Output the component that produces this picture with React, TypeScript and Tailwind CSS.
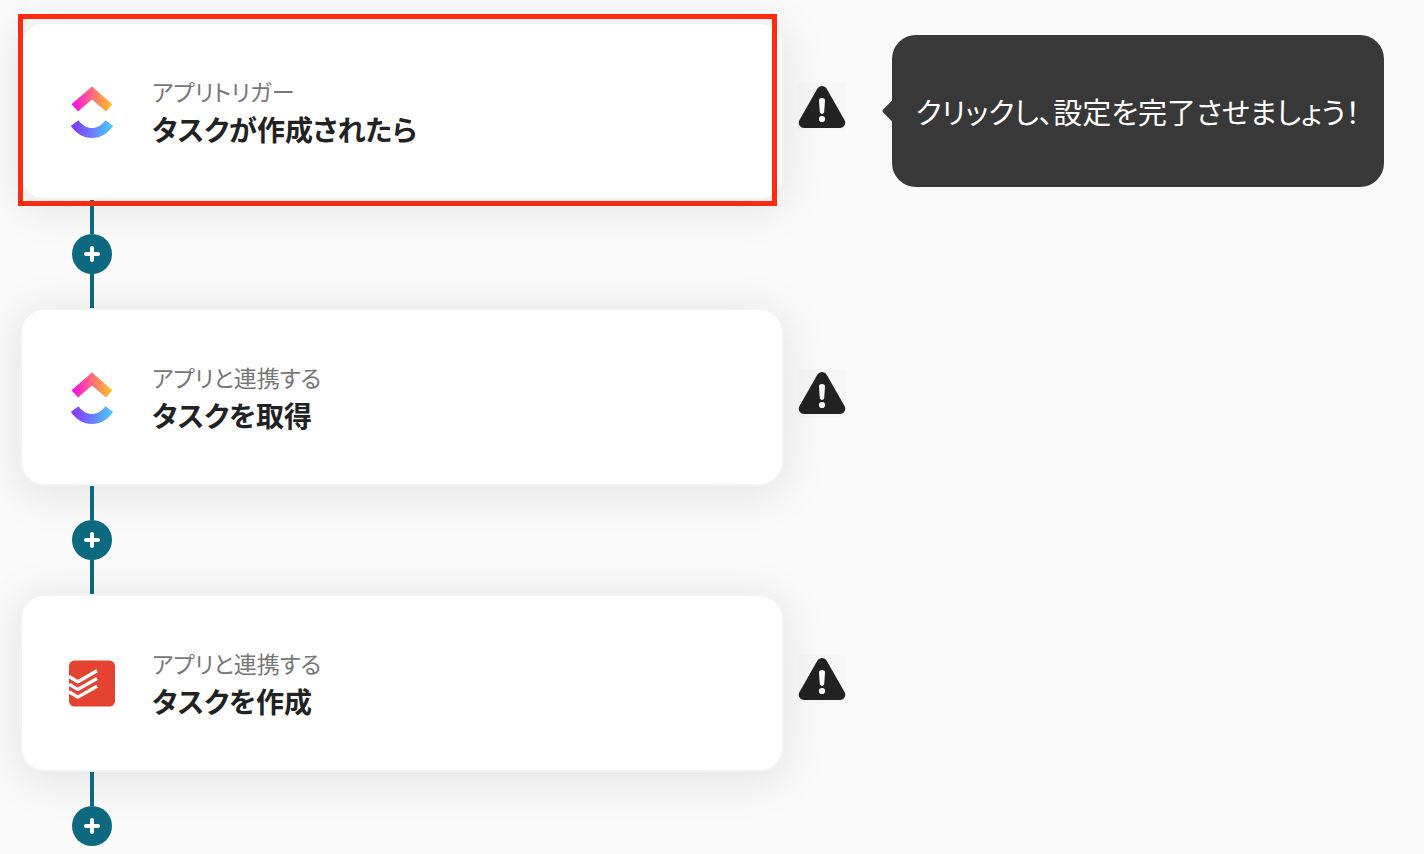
import React from "react";

type App = "clickup" | "todoist";

interface Step {
  app: App;
  kind: string;
  title: string;
  hint?: string;
}

const steps: Step[] = [
  {
    app: "clickup",
    kind: "アプリトリガー",
    title: "タスクが作成されたら",
    hint: "クリックし、設定を完了させましょう！",
  },
  { app: "clickup", kind: "アプリと連携する", title: "タスクを取得" },
  { app: "todoist", kind: "アプリと連携する", title: "タスクを作成" },
];

function ClickUpLogo({ id }: { id: string }) {
  return (
    <svg viewBox="0 -1 48 56" className="h-14 w-12 shrink-0" aria-hidden="true">
      <defs>
        <linearGradient id={`${id}-top`} x1="3" x2="45" y1="0" y2="0" gradientUnits="userSpaceOnUse">
          <stop offset="0" stopColor="#ff02f0" />
          <stop offset="0.5" stopColor="#ff6b7c" />
          <stop offset="1" stopColor="#ffc820" />
        </linearGradient>
        <linearGradient id={`${id}-bottom`} x1="3" x2="45" y1="0" y2="0" gradientUnits="userSpaceOnUse">
          <stop offset="0" stopColor="#8930fd" />
          <stop offset="1" stopColor="#49ccf9" />
        </linearGradient>
      </defs>
      <path d="M3.600 20.200 24 2.400l20.300 17.800-6.300 7.400L24 15.400 10 27.600z" fill={`url(#${id}-top)`} />
      <path
        d="M2.800 42.100l7.700-5.900C14.600 41.600 19 44 24 44s9.300-2.400 13.400-7.800l7.800 5.900C39.400 49.900 32.400 54 24 54S8.700 49.900 2.800 42.100z"
        fill={`url(#${id}-bottom)`}
      />
    </svg>
  );
}

function TodoistLogo() {
  return (
    <svg viewBox="0 0 48 48" className="size-12 shrink-0" aria-hidden="true">
      <rect x="1" y="1.600" width="46" height="46" rx="5.500" fill="#e44332" />
      <g fill="none" stroke="#fff" strokeWidth="3.400">
        <path d="M1 17.400 8.800 22.200q1 .6 2 0L29 11.800" />
        <path d="M1 25.100l7.800 4.800q1 .6 2 0L29 19.500" />
        <path d="M1 32.800l7.800 4.800q1 .6 2 0L29 27.200" />
      </g>
    </svg>
  );
}

function WarningIcon() {
  return (
    <svg viewBox="0 0 48 48" className="size-12" aria-hidden="true">
      <path
        d="M19.300 5.700c2.200-3.600 7.200-3.600 9.400 0l17.800 31.400c2 3.600-.3 7.900-4.500 7.900H6c-4.200 0-6.500-4.300-4.500-7.900z"
        fill="#222"
      />
      <path d="M21 17.500c0-3.200 6-3.200 6 0l-.8 11.500c-.2 2.400-4.200 2.400-4.400 0z" fill="#fff" />
      <circle cx="24" cy="36" r="3.100" fill="#fff" />
    </svg>
  );
}

function StepRow({ step, index }: { step: Step; index: number }) {
  return (
    <div className="grid grid-cols-[minmax(0,764px)_48px_auto] items-center justify-start">
      <div className="relative">
        <button
          type="button"
          className="flex w-full items-center gap-9 rounded-3xl border-2 border-[#f3f3f3] bg-white px-[46px] py-[50px] text-left shadow-[0_6px_48px_rgba(0,0,0,0.1)]"
        >
          {step.app === "clickup" ? <ClickUpLogo id={`clickup-${index}`} /> : <TodoistLogo />}
          <span className="flex min-w-0 flex-col gap-0.5">
            <span className="text-[23px] leading-[34px] text-[#777]">{step.kind}</span>
            <span className="text-[28px] leading-[38px] font-bold text-[#222]">{step.title}</span>
          </span>
        </button>
        {step.hint && (
          <div className="pointer-events-none absolute -top-2 right-[7px] -bottom-1.5 -left-0.5 z-10 border-5 border-[#ff2a12]" />
        )}
      </div>
      <div className="ml-3.5 pb-2">
        <button type="button" aria-label="設定が未完了です" className="block w-12 bg-[#f7f7f7]">
          <WarningIcon />
        </button>
      </div>
      {step.hint && (
        <div className="relative ml-15 rounded-3xl bg-[#383838] px-6 py-14 text-[29px] leading-10 text-white">
          <span className="absolute top-1/2 -left-[7px] size-4 -translate-y-1/2 rotate-45 rounded-xs bg-[#383838]" />
          <p className="relative">{step.hint}</p>
        </div>
      )}
    </div>
  );
}

function Connector({ last }: { last: boolean }) {
  return (
    <div className="relative ml-[52px] flex w-10 flex-col items-center">
      <span className="h-[34px] w-1 bg-[#0d6980]" />
      <button
        type="button"
        aria-label="ステップを追加"
        className="flex size-10 items-center justify-center rounded-full bg-[#0d6980]"
      >
        <svg viewBox="0 0 16 16" className="size-4" aria-hidden="true">
          <path d="M8 2v12M2 8h12" stroke="#fff" strokeWidth="4" strokeLinecap="round" />
        </svg>
      </button>
      {!last && <span className="h-[34px] w-1 bg-[#0d6980]" />}
    </div>
  );
}

export default function App() {
  return (
    <main
      lang="ja"
      className="min-h-screen overflow-hidden bg-[#fafafa] pt-[22px] pr-10 pb-2 pl-5 font-['Noto_Sans_CJK_JP',sans-serif] [font-feature-settings:'palt']"
    >
      <ol>
        {steps.map((step, i) => (
          <li key={step.title}>
            <StepRow step={step} index={i} />
            <Connector last={i === steps.length - 1} />
          </li>
        ))}
      </ol>
    </main>
  );
}
